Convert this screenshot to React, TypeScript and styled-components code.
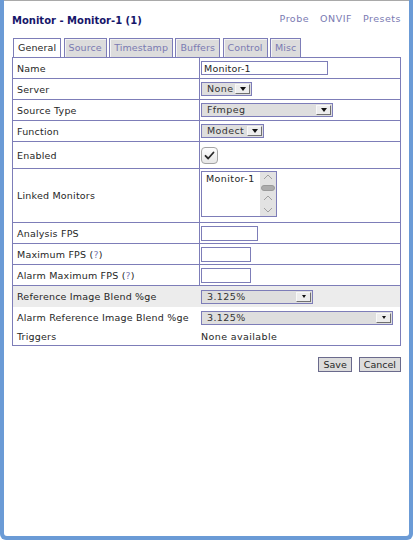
import React from 'react';
import styled, { createGlobalStyle } from 'styled-components';

const LINE = '#7d7db8';
const LINK = '#7a7ab2';
const TEXT = '#262626';

const Global = createGlobalStyle`
  html, body { margin: 0; padding: 0; background: #fff; }
  body { font-family: "DejaVu Sans", Verdana, sans-serif; font-size: 9.5px; letter-spacing: 0.2px; color: ${TEXT}; }
  * { box-sizing: border-box; }
`;

const Frame = styled.div`
  width: 413px;
  height: 540px;
  background: #6b9bd6;
  padding: 0 4px 4px 4px;
  border-radius: 0 0 6px 6px;
  display: flex;
`;

const Sheet = styled.div`
  flex: 1;
  background: #fff;
  border-top: 1px solid #a9a9a9;
  border-radius: 0 0 3px 3px;
  padding: 14px 8px 0 8px;
`;

const Header = styled.div`
  display: flex;
  justify-content: space-between;
  align-items: flex-start;
  height: 12px;
`;

const Title = styled.h2`
  margin: 0;
  font-size: 10px;
  line-height: 12px;
  letter-spacing: 0;
  font-weight: bold;
  color: #16166a;
`;

const Links = styled.nav`
  display: flex;
  gap: 11px;
  margin-top: -2px;
  line-height: 12px;
  letter-spacing: 0.5px;
`;

const Link = styled.a`
  color: ${LINK};
  text-decoration: none;
`;

const TabBar = styled.div`
  display: flex;
  gap: 2.4px;
  padding-left: 1px;
  margin-top: 11px;
  height: 19px;
`;

const Tab = styled.div<{ $active?: boolean }>`
  height: 19px;
  padding: 0 4px;
  line-height: 17px;
  letter-spacing: 0.1px;
  border: 1px solid ${LINE};
  border-bottom: none;
  background: ${(p) => (p.$active ? '#fff' : '#dcdcdc')};
  color: ${(p) => (p.$active ? TEXT : LINK)};
  box-shadow: ${(p) => (p.$active ? 'none' : 'inset 1px 1px 0 #f4f4f4')};
`;

const FormTable = styled.div`
  border: 1px solid ${LINE};
  width: 389px;
`;

const Row = styled.div<{ $h: number; $shade?: boolean; $plain?: boolean }>`
  display: grid;
  grid-template-columns: 187px 1fr;
  height: ${(p) => p.$h}px;
  border-bottom: ${(p) => (p.$plain ? 'none' : `1px solid ${LINE}`)};
  background: ${(p) => (p.$shade ? '#ececec' : '#fff')};
`;

const Label = styled.div<{ $plain?: boolean }>`
  display: flex;
  align-items: center;
  padding-left: 4px;
  border-right: 1px solid ${(p) => (p.$plain ? 'transparent' : LINE)};
  white-space: nowrap;
`;

const Value = styled.div<{ $top?: number }>`
  display: flex;
  align-items: ${(p) => (p.$top !== undefined ? 'flex-start' : 'center')};
  padding-left: 1px;
  padding-top: ${(p) => p.$top ?? 0}px;
`;

const Help = styled.span`
  color: ${LINK};
`;

const TextBox = styled.input<{ $w: number; $h?: number }>`
  width: ${(p) => p.$w}px;
  height: ${(p) => p.$h ?? 14}px;
  border: 1px solid ${LINE};
  background: #fff;
  padding: 0 0 0 2px;
  margin: 0;
  font: inherit;
  font-size: 9.5px;
  letter-spacing: 0.2px;
  color: ${TEXT};
  outline: none;
`;

const SelectShell = styled.div<{ $w: number }>`
  width: ${(p) => p.$w}px;
  height: 14px;
  border: 1px solid ${LINE};
  background: #dedede;
  display: flex;
  align-items: center;
  padding: 1px;
`;

const SelectText = styled.span`
  flex: 1;
  padding-left: 4px;
  line-height: 12px;
  letter-spacing: 0.4px;
  color: #333;
`;

const ArrowBox = styled.span`
  width: 15px;
  height: 10px;
  background: #ededed;
  border: 1px solid;
  border-color: #f8f8f8 #707070 #707070 #f8f8f8;
  display: flex;
  align-items: center;
  justify-content: center;
`;

const Triangle = styled.span<{ $small?: boolean }>`
  width: 0;
  height: 0;
  border-left: ${(p) => (p.$small ? 2 : 3.5)}px solid transparent;
  border-right: ${(p) => (p.$small ? 2 : 3.5)}px solid transparent;
  border-top: ${(p) => (p.$small ? 3 : 4)}px solid #111;
`;

const Select = ({ w, value, small }: { w: number; value: string; small?: boolean }) => (
  <SelectShell $w={w}>
    <SelectText>{value}</SelectText>
    <ArrowBox>
      <Triangle $small={small} />
    </ArrowBox>
  </SelectShell>
);

const Check = () => (
  <svg width="17" height="17" viewBox="0 0 17 17">
    <defs>
      <linearGradient id="cbg" x1="0" y1="0" x2="0" y2="1">
        <stop offset="0" stopColor="#ffffff" />
        <stop offset="1" stopColor="#e6e6e6" />
      </linearGradient>
    </defs>
    <rect x="0.5" y="0.5" width="16" height="16" rx="3.5" fill="url(#cbg)" stroke="#a4a4a4" />
    <path d="M4.5 8.8 L7.2 11.5 L12.5 5.5" fill="none" stroke="#2a2a2a" strokeWidth="1.8" strokeLinecap="round" strokeLinejoin="round" />
  </svg>
);

const ListBox = styled.div`
  width: 76px;
  height: 46px;
  border: 1px solid ${LINE};
  background: #fff;
  display: flex;
`;

const ListItems = styled.div`
  flex: 1;
  padding: 1px 0 0 4px;
  line-height: 12px;
  letter-spacing: 0.4px;
`;

const ScrollTrack = styled.div`
  width: 16px;
  background: #e2e2e2;
`;

const Scrollbar = () => (
  <ScrollTrack>
    <svg width="16" height="44" viewBox="0 0 16 44">
      <path d="M4 7 L8 3 L12 7" fill="none" stroke="#a0a0a0" strokeWidth="1" />
      <rect x="1.5" y="13.5" width="13" height="5" rx="2.5" fill="#acacac" stroke="#9a9a9a" />
      <path d="M4 28 L8 24 L12 28" fill="none" stroke="#a0a0a0" strokeWidth="1" />
      <path d="M4 36 L8 40 L12 36" fill="none" stroke="#a0a0a0" strokeWidth="1" />
    </svg>
  </ScrollTrack>
);

const Plain = styled.span`
  line-height: 12px;
  letter-spacing: 0.4px;
`;

const Actions = styled.div`
  display: flex;
  justify-content: flex-end;
  gap: 7px;
  width: 389px;
  margin-top: 11px;
`;

const Button = styled.button`
  height: 15px;
  padding: 0 4px;
  margin: 0;
  border: 1px solid #6a6a8c;
  background: #dcdcdc;
  font: inherit;
  font-size: 9.5px;
  letter-spacing: 0;
  line-height: 13px;
  color: ${TEXT};
`;

export default function App() {
  return (
    <>
      <Global />
      <Frame>
        <Sheet>
          <Header>
            <Title>Monitor - Monitor-1 (1)</Title>
            <Links>
              <Link>Probe</Link>
              <Link>ONVIF</Link>
              <Link>Presets</Link>
            </Links>
          </Header>
          <TabBar>
            <Tab $active>General</Tab>
            <Tab>Source</Tab>
            <Tab>Timestamp</Tab>
            <Tab>Buffers</Tab>
            <Tab>Control</Tab>
            <Tab>Misc</Tab>
          </TabBar>
          <FormTable>
            <Row $h={21}>
              <Label>Name</Label>
              <Value>
                <TextBox $w={127} defaultValue="Monitor-1" />
              </Value>
            </Row>
            <Row $h={21}>
              <Label>Server</Label>
              <Value>
                <Select w={51} value="None" />
              </Value>
            </Row>
            <Row $h={21}>
              <Label>Source Type</Label>
              <Value>
                <Select w={132} value="Ffmpeg" />
              </Value>
            </Row>
            <Row $h={21}>
              <Label>Function</Label>
              <Value>
                <Select w={63} value="Modect" />
              </Value>
            </Row>
            <Row $h={27}>
              <Label>Enabled</Label>
              <Value>
                <Check />
              </Value>
            </Row>
            <Row $h={54}>
              <Label>Linked Monitors</Label>
              <Value $top={2}>
                <ListBox>
                  <ListItems>Monitor-1</ListItems>
                  <Scrollbar />
                </ListBox>
              </Value>
            </Row>
            <Row $h={21}>
              <Label>Analysis FPS</Label>
              <Value>
                <TextBox $w={57} $h={15} />
              </Value>
            </Row>
            <Row $h={21}>
              <Label>
                Maximum FPS (<Help>?</Help>)
              </Label>
              <Value>
                <TextBox $w={50} $h={15} />
              </Value>
            </Row>
            <Row $h={21}>
              <Label>
                Alarm Maximum FPS (<Help>?</Help>)
              </Label>
              <Value>
                <TextBox $w={50} $h={15} />
              </Value>
            </Row>
            <Row $h={21} $shade $plain>
              <Label $plain>Reference Image Blend %ge</Label>
              <Value>
                <Select w={112} value="3.125%" small />
              </Value>
            </Row>
            <Row $h={21} $plain>
              <Label $plain>Alarm Reference Image Blend %ge</Label>
              <Value>
                <Select w={192} value="3.125%" small />
              </Value>
            </Row>
            <Row $h={17} $plain>
              <Label $plain>Triggers</Label>
              <Value>
                <Plain>None available</Plain>
              </Value>
            </Row>
          </FormTable>
          <Actions>
            <Button>Save</Button>
            <Button>Cancel</Button>
          </Actions>
        </Sheet>
      </Frame>
    </>
  );
}
